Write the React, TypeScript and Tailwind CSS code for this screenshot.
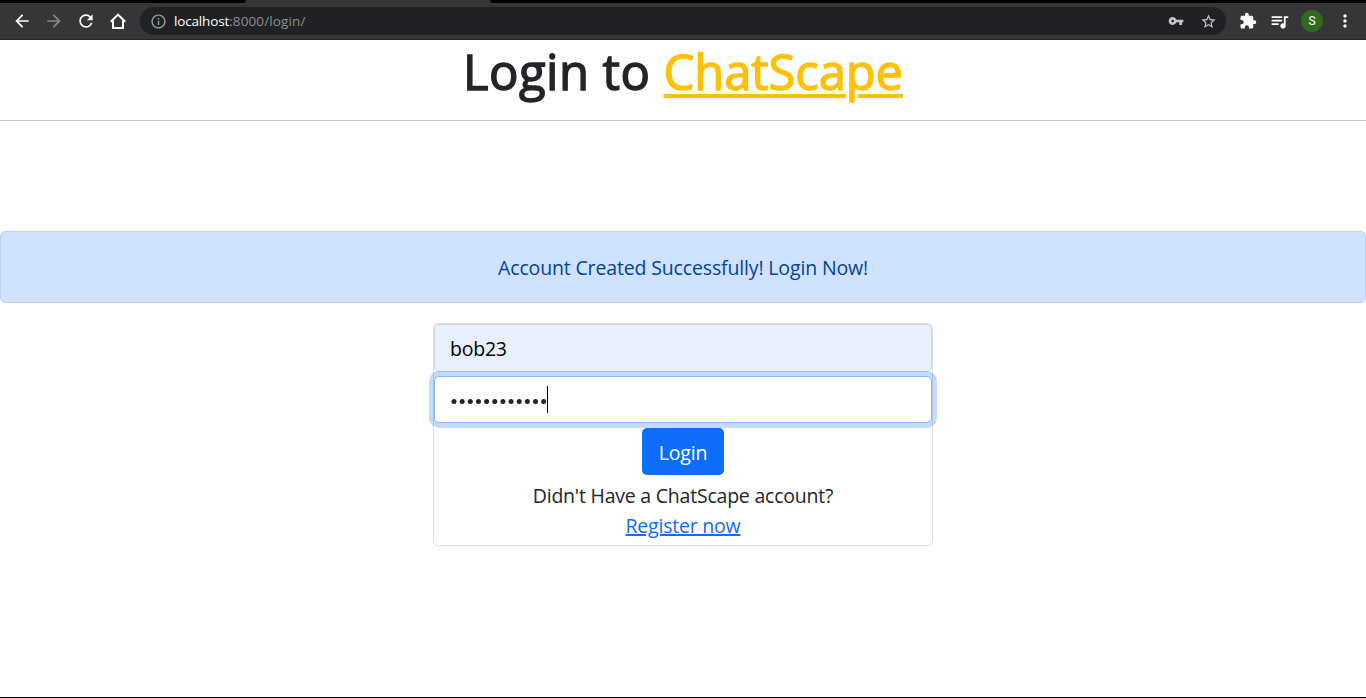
import React from "react";
import {
  MdArrowBack,
  MdArrowForward,
  MdRefresh,
  MdInfoOutline,
  MdVpnKey,
  MdStarOutline,
  MdExtension,
  MdMoreVert,
  MdQueueMusic,
} from "react-icons/md";

function HomeIcon() {
  return (
    <svg width="20" height="20" viewBox="0 0 20 20" fill="none" stroke="#fff" strokeWidth="2">
      <path d="M2.8 10.8 10 3.6l7.2 7.2M5 9.4V17h10V9.4" />
    </svg>
  );
}

function BrowserBar() {
  return (
    <header className="h-10 shrink-0 flex flex-col bg-[#353637]">
      <div className="flex h-[3px]">
        <div className="w-[246px] rounded-br bg-black" />
        <div className="w-[244px]" />
        <div className="flex-1 rounded-bl bg-black" />
      </div>
      <div className="flex h-[37px] items-center border-b border-[#242526] text-white">
        <nav className="flex w-[140px] items-center gap-3 pl-3">
          <MdArrowBack size={20} />
          <MdArrowForward size={20} color="#87888a" />
          <MdRefresh size={20} />
          <HomeIcon />
        </nav>
        <div className="flex h-7 w-[1086px] items-center rounded-full bg-[#202124] pl-2.5 pr-[9px]">
          <MdInfoOutline size={17} color="#9aa0a6" />
          <p className="ml-[7px] pt-px font-['Open_Sans',sans-serif] text-[13.5px] tracking-[0.13px] text-[#8c8e91]">
            <span className="tracking-[-0.16px] text-white">localhost</span>:8000/login/
          </p>
          <div className="ml-auto flex items-center gap-4 text-[#c5c8cb]">
            <MdVpnKey size={16} />
            <MdStarOutline size={17} />
          </div>
        </div>
        <div className="flex items-center pl-[13px]">
          <MdExtension size={18} />
          <MdQueueMusic size={21} className="ml-3" />
          <span className="ml-[11px] flex h-[22px] w-[22px] items-center justify-center rounded-full bg-[#33691e] font-[Roboto,sans-serif] text-[12px]">
            S
          </span>
          <MdMoreVert size={20} className="ml-3" />
        </div>
      </div>
    </header>
  );
}

export default function App() {
  return (
    <div className="flex h-[698px] w-[1366px] flex-col overflow-hidden border-b border-black bg-white font-['Open_Sans',sans-serif] text-[19.5px] tracking-[-0.22px] text-[#212529]">
      <BrowserBar />
      <h1 className="flex h-[81px] shrink-0 justify-center border-b border-[#c8c8c9] text-[49px] font-normal leading-[62px] tracking-[-0.15px] [-webkit-text-stroke:1.4px_currentColor]">
        <span className="whitespace-pre tracking-[0.45px]">Login to </span>
        <span className="text-[#ffc107] underline decoration-[4px] underline-offset-[4px]">ChatScape</span>
      </h1>
      <div className="mt-[110px] flex h-[72px] shrink-0 items-center justify-center rounded-[5px] border border-[#b6d4fe] bg-[#cfe2ff] pt-0.5 tracking-[-0.15px] text-[#084298]">
        <p>Account Created Successfully! Login Now!</p>
      </div>
      <form className="mx-auto mt-5 flex h-[223px] w-[500px] shrink-0 flex-col items-center rounded-[5px] border border-[#dfdfdf]">
        <div className="flex h-12 w-full items-center rounded-[5px] border border-[#ced4da] bg-[#e8f0fe] px-[15px] pt-px text-black">
          bob23
        </div>
        <div className="mt-1 flex h-[47px] w-full items-center rounded-[5px] border border-[#86b7fe] bg-white px-[15px] shadow-[0_0_0_5px_rgba(13,110,253,0.25)]">
          <svg width="97" height="27" viewBox="0 0 97 27" fill="#212529">
            {Array.from({ length: 12 }, (_, i) => (
              <circle key={i} cx={4 + i * 8.15} cy="15.5" r="2.5" />
            ))}
          </svg>
          <span className="h-[27px] w-px bg-black" />
        </div>
        <button type="button" className="mt-[5px] h-[47px] w-[82px] shrink-0 rounded-[5px] bg-[#0d6efd] pt-[3px] text-white">
          Login
        </button>
        <p className="mt-1.5 leading-[30px]">Didn't Have a ChatScape account?</p>
        <a className="leading-[30px] text-[#0d6efd] underline decoration-[1.5px]">Register now</a>
      </form>
    </div>
  );
}
